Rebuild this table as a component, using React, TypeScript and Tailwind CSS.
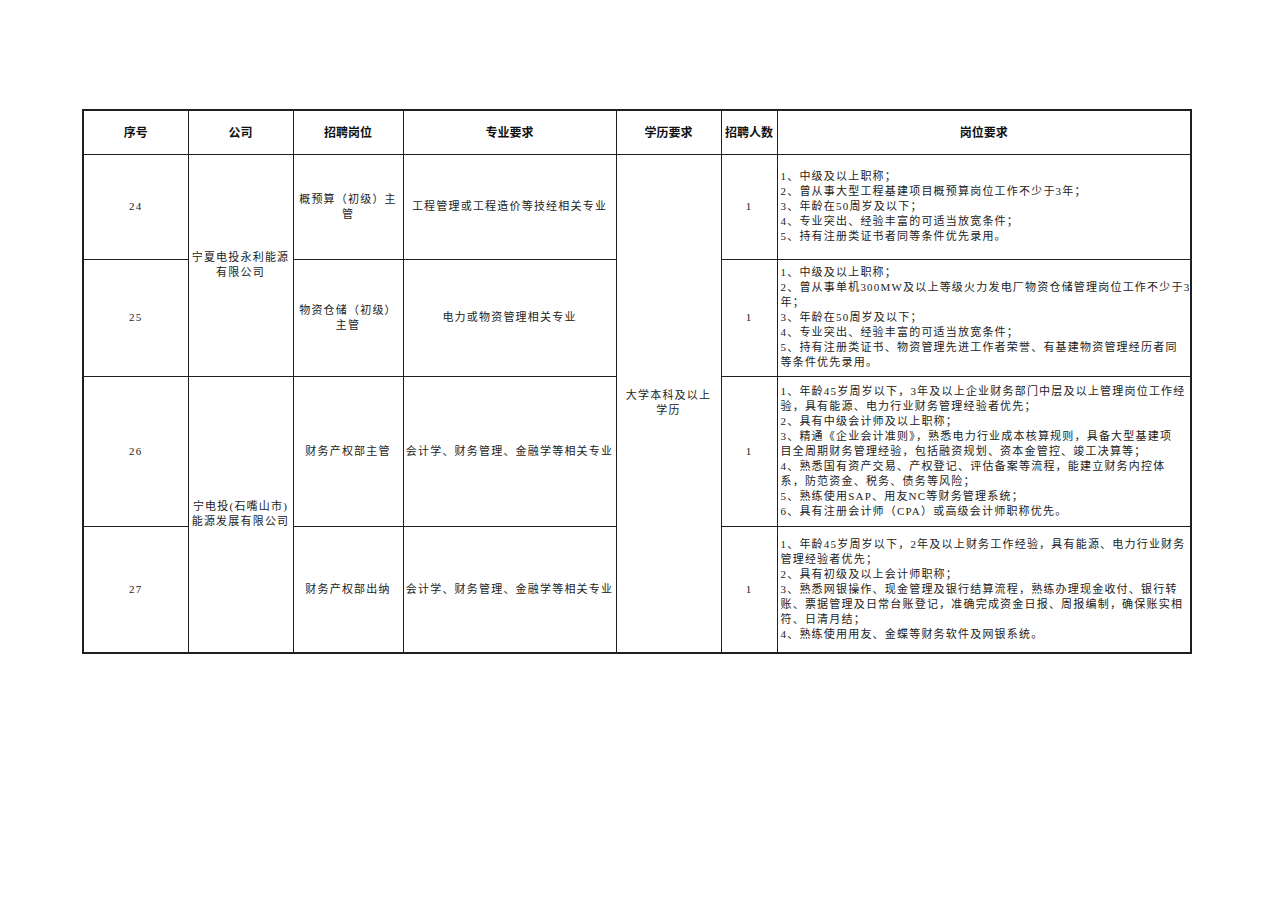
const body = "font-['Liberation_Serif','Noto_Sans_CJK_SC',serif] text-[11px] tracking-[1.2px] text-[#222]"

const cols = [105, 105, 110, 213, 105, 56, 414]

const headers = ['序号', '公司', '招聘岗位', '专业要求', '学历要求', '招聘人数', '岗位要求']

const rows = [
  {
    no: '24',
    height: 'h-[105px]',
    title: ['概预算（初级）主', '管'],
    major: '工程管理或工程造价等技经相关专业',
    count: '1',
    reqs: [
      '1、中级及以上职称；',
      '2、曾从事大型工程基建项目概预算岗位工作不少于3年；',
      '3、年龄在50周岁及以下；',
      '4、专业突出、经验丰富的可适当放宽条件；',
      '5、持有注册类证书者同等条件优先录用。',
    ],
  },
  {
    no: '25',
    height: 'h-[117px]',
    title: ['物资仓储（初级）', '主管'],
    major: '电力或物资管理相关专业',
    count: '1',
    reqs: [
      '1、中级及以上职称；',
      '2、曾从事单机300MW及以上等级火力发电厂物资仓储管理岗位工作不少于3',
      '年；',
      '3、年龄在50周岁及以下；',
      '4、专业突出、经验丰富的可适当放宽条件；',
      '5、持有注册类证书、物资管理先进工作者荣誉、有基建物资管理经历者同',
      '等条件优先录用。',
    ],
  },
  {
    no: '26',
    height: 'h-[150px]',
    title: ['财务产权部主管'],
    major: '会计学、财务管理、金融学等相关专业',
    count: '1',
    reqs: [
      '1、年龄45岁周岁以下，3年及以上企业财务部门中层及以上管理岗位工作经',
      '验，具有能源、电力行业财务管理经验者优先；',
      '2、具有中级会计师及以上职称；',
      '3、精通《企业会计准则》，熟悉电力行业成本核算规则，具备大型基建项',
      '目全周期财务管理经验，包括融资规划、资本金管控、竣工决算等；',
      '4、熟悉国有资产交易、产权登记、评估备案等流程，能建立财务内控体',
      '系，防范资金、税务、债务等风险；',
      '5、熟练使用SAP、用友NC等财务管理系统；',
      '6、具有注册会计师（CPA）或高级会计师职称优先。',
    ],
  },
  {
    no: '27',
    height: 'h-[127px]',
    title: ['财务产权部出纳'],
    major: '会计学、财务管理、金融学等相关专业',
    count: '1',
    reqs: [
      '1、年龄45岁周岁以下，2年及以上财务工作经验，具有能源、电力行业财务',
      '管理经验者优先；',
      '2、具有初级及以上会计师职称；',
      '3、熟悉网银操作、现金管理及银行结算流程，熟练办理现金收付、银行转',
      '账、票据管理及日常台账登记，准确完成资金日报、周报编制，确保账实相',
      '符、日清月结；',
      '4、熟练使用用友、金蝶等财务软件及网银系统。',
    ],
  },
]

const companies: Record<number, string[]> = {
  0: ['宁夏电投永利能源', '有限公司'],
  2: ['宁电投(石嘴山市)', '能源发展有限公司'],
}

const cell = 'border-[1.5px] border-[#1f1f1f] align-middle'

export default function App() {
  return (
    <div className="min-h-[905px] w-[1280px] bg-white pl-[82px] pt-[109px]">
      <table className="table-fixed border-collapse border-2 border-[#1f1f1f]" style={{ width: 1108 }}>
        <colgroup>
          {cols.map((w, i) => (
            <col key={i} style={{ width: w }} />
          ))}
        </colgroup>
        <thead>
          <tr className="h-[44px]">
            {headers.map((h) => (
              <th
                key={h}
                className={`${cell} text-center font-['Noto_Sans_CJK_SC',sans-serif] text-[12px] font-bold text-[#111]`}
              >
                {h}
              </th>
            ))}
          </tr>
        </thead>
        <tbody>
          {rows.map((r, i) => (
            <tr key={r.no} className={r.height}>
              <td className={`${cell} ${body} text-center`}>{r.no}</td>
              {companies[i] && (
                <td rowSpan={2} className={`${cell} ${body} text-center leading-[15px]`}>
                  {companies[i].map((l) => (
                    <div key={l} className="whitespace-nowrap">
                      {l}
                    </div>
                  ))}
                </td>
              )}
              <td className={`${cell} ${body} text-center leading-[15px]`}>
                {r.title.map((l) => (
                  <div key={l} className="whitespace-nowrap">
                    {l}
                  </div>
                ))}
              </td>
              <td className={`${cell} ${body} overflow-hidden whitespace-nowrap text-center`}>{r.major}</td>
              {i === 0 && (
                <td rowSpan={4} className={`${cell} ${body} text-center leading-[15px]`}>
                  <div>大学本科及以上</div>
                  <div>学历</div>
                </td>
              )}
              <td className={`${cell} ${body} text-center`}>{r.count}</td>
              <td className={`${cell} ${body} overflow-hidden pl-[3px] leading-[15px]`}>
                {r.reqs.map((l) => (
                  <div key={l} className="whitespace-nowrap">
                    {l}
                  </div>
                ))}
              </td>
            </tr>
          ))}
        </tbody>
      </table>
    </div>
  )
}
